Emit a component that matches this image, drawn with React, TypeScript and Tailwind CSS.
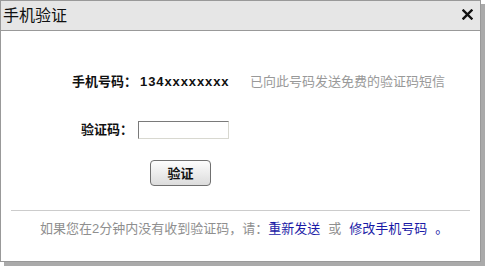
import React, { useState } from 'react';

export default function App() {
  const [code, setCode] = useState('');

  return (
    <div className="w-[487px] h-[270px] bg-white" style={{ fontFamily: '"Liberation Sans", "Noto Sans CJK SC", sans-serif' }}>
      <div className="w-[481px] h-[262px] border border-[#999] bg-white shadow-[4px_4px_0_#aaa] flex flex-col">
        {/* Title bar */}
        <div className="h-[30px] shrink-0 bg-[#e6e6e6] border-b border-[#999] flex items-center justify-between pl-[2px] pr-[7px]">
          <span className="text-[16px] leading-none text-[#111]">手机验证</span>
          <svg width="11" height="11" viewBox="0 0 11 11" className="mt-[-2px]">
            <path d="M1.5 1.5 L9.5 9.5 M9.5 1.5 L1.5 9.5" stroke="#111" strokeWidth="2.4" strokeLinecap="square" />
          </svg>
        </div>

        {/* Phone row */}
        <div className="mt-[41px] h-[20px] flex items-center text-[13px] leading-[20px]">
          <span className="ml-[71px] font-bold text-[#111]">手机号码：</span>
          <span className="ml-[3px] font-bold text-[#111] tracking-[0.9px] w-[110px]">134xxxxxxxx</span>
          <span className="text-[#999]">已向此号码发送免费的验证码短信</span>
        </div>

        {/* Code row */}
        <div className="mt-[29px] h-[18px] flex items-center text-[13px]">
          <span className="ml-[80px] font-bold text-[#111]">验证码：</span>
          <input
            value={code}
            onChange={(e) => setCode(e.target.value)}
            className="ml-[5px] w-[91px] h-[18px] border border-t-[#7a7a7a] border-l-[#7a7a7a] border-r-[#d8d8d0] border-b-[#d8d8d0] bg-white outline-none text-[12px] px-1"
          />
        </div>

        {/* Button */}
        <div className="mt-[21px] flex">
          <button className="ml-[149px] w-[61px] h-[26px] rounded-[4px] border border-[#707070] bg-gradient-to-b from-[#fdfdfd] to-[#dcdcdc] text-[13px] font-bold text-[#111] leading-none">
            验证
          </button>
        </div>

        {/* Separator */}
        <div className="mt-[24px] mx-[10px] border-t border-[#ccc]" />

        {/* Footer */}
        <div className="mt-[8px] h-[20px] pl-[39px] text-[13px] leading-[20px] text-[#8f8f8f] whitespace-nowrap">
          如果您在2分钟内没有收到验证码，请：
          <a href="#" className="text-[#1a1aa6]">重新发送</a>
          <span className="mx-[8px]">或</span>
          <a href="#" className="text-[#1a1aa6]">修改手机号码</a>
          <span className="ml-[8px] text-[#1a1aa6]">。</span>
        </div>
      </div>
    </div>
  );
}
